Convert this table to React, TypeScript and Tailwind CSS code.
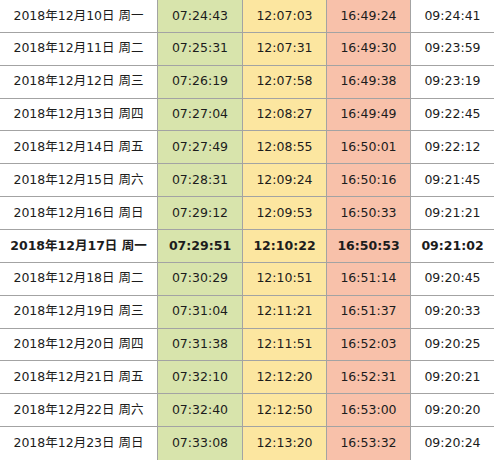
const rows: [string, string, string, string, string][] = [
  ['2018年12月10日 周一', '07:24:43', '12:07:03', '16:49:24', '09:24:41'],
  ['2018年12月11日 周二', '07:25:31', '12:07:31', '16:49:30', '09:23:59'],
  ['2018年12月12日 周三', '07:26:19', '12:07:58', '16:49:38', '09:23:19'],
  ['2018年12月13日 周四', '07:27:04', '12:08:27', '16:49:49', '09:22:45'],
  ['2018年12月14日 周五', '07:27:49', '12:08:55', '16:50:01', '09:22:12'],
  ['2018年12月15日 周六', '07:28:31', '12:09:24', '16:50:16', '09:21:45'],
  ['2018年12月16日 周日', '07:29:12', '12:09:53', '16:50:33', '09:21:21'],
  ['2018年12月17日 周一', '07:29:51', '12:10:22', '16:50:53', '09:21:02'],
  ['2018年12月18日 周二', '07:30:29', '12:10:51', '16:51:14', '09:20:45'],
  ['2018年12月19日 周三', '07:31:04', '12:11:21', '16:51:37', '09:20:33'],
  ['2018年12月20日 周四', '07:31:38', '12:11:51', '16:52:03', '09:20:25'],
  ['2018年12月21日 周五', '07:32:10', '12:12:20', '16:52:31', '09:20:21'],
  ['2018年12月22日 周六', '07:32:40', '12:12:50', '16:53:00', '09:20:20'],
  ['2018年12月23日 周日', '07:33:08', '12:13:20', '16:53:32', '09:20:24'],
];

const cellBg = ['bg-white', 'bg-[#d8e4ac]', 'bg-[#fce6a0]', 'bg-[#f8c1aa]', 'bg-white'];

export default function App() {
  return (
    <div className="w-[494px] h-[460px] overflow-hidden bg-white text-[#1c1c1c] text-[12.5px] font-['DejaVu_Sans','Noto_Sans_CJK_SC',sans-serif]">
      <div className="grid h-[460px] grid-cols-[158px_85px_84px_84px_83px] grid-rows-[repeat(14,minmax(0,1fr))]">
        {rows.map((row, i) =>
          row.map((text, j) => (
            <div
              key={i + '-' + j}
              className={
                'flex items-center justify-center whitespace-nowrap border-[#a3a3a3] ' +
                cellBg[j] +
                (j < 4 ? ' border-r' : '') +
                (i < rows.length - 1 ? ' border-b' : '') +
                (i === 7 ? ' font-bold' : '')
              }
            >
              {text}
            </div>
          ))
        )}
      </div>
    </div>
  );
}
